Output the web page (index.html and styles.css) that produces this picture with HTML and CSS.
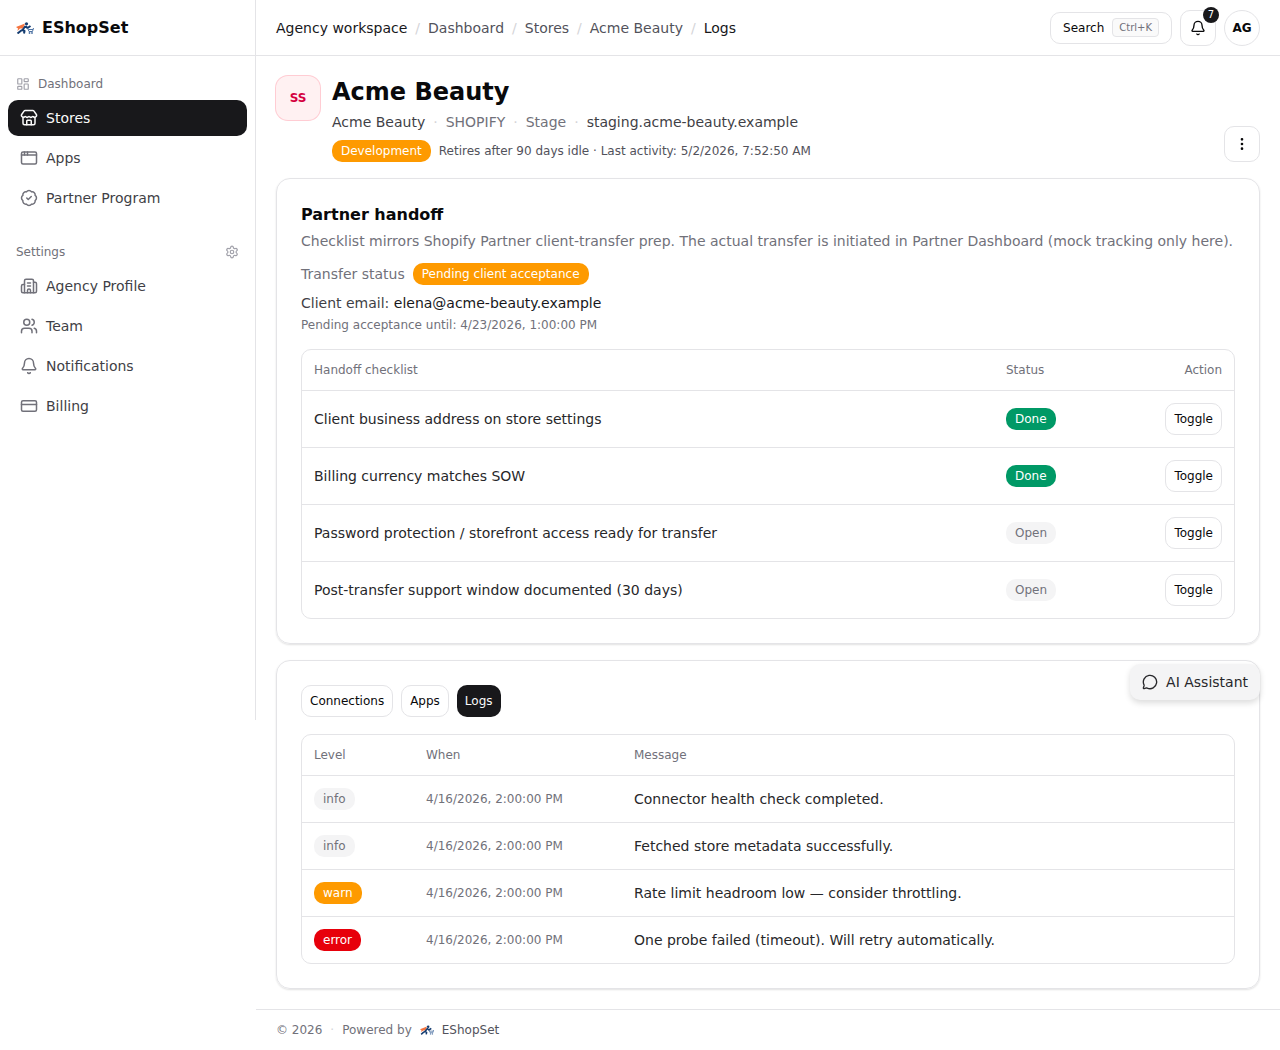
FILE: index.html
```html
<!DOCTYPE html>
<html lang="en">
<head>
    <meta charset="UTF-8">
    <meta name="viewport" content="width=device-width, initial-scale=1.0">
    <title>Acme Beauty - Logs - EShopSet</title>
    <link rel="stylesheet" href="styles.css">
</head>
<body>
    <!-- Shared icons -->
    <svg class="sprite" aria-hidden="true">
        <symbol id="logo" viewBox="0 0 36 24">
            <path d="M0 10 L18 3 L14 13 L8 13 L3 18 L4 13 Z" fill="#f4743f"/>
            <circle cx="21" cy="3.5" r="3.2" fill="#143c70"/>
            <path d="M19 8 L13 16 L17 18 L16 23 M12 16 L8 19 L3 23 M19 8 L23 12 L29 8" fill="none" stroke="#143c70" stroke-width="4" stroke-linejoin="round"/>
            <path d="M23 12 L26 19 H33 L35 12 M25 15 H34" fill="none" stroke="#4d72a3" stroke-width="2"/>
            <circle cx="27" cy="22" r="1.8" fill="#4d72a3"/>
            <circle cx="32" cy="22" r="1.8" fill="#4d72a3"/>
        </symbol>
        <symbol id="bell" viewBox="0 0 24 24">
            <path d="M10.268 21a2 2 0 0 0 3.464 0"/>
            <path d="M3.262 15.326A1 1 0 0 0 4 17h16a1 1 0 0 0 .74-1.673C19.41 13.956 18 12.499 18 8A6 6 0 0 0 6 8c0 4.499-1.411 5.956-2.738 7.326"/>
        </symbol>
    </svg>

    <div class="layout">
        <aside class="sidebar">
            <a class="brand" href="#">
                <svg class="brand-logo"><use href="#logo"/></svg>
                EShopSet
            </a>
            <nav class="side-nav">
                <div class="nav-group">
                    <a class="nav-label" href="#">
                        <svg class="icon icon-small" viewBox="0 0 24 24"><rect width="7" height="9" x="3" y="3" rx="1"/><rect width="7" height="5" x="14" y="3" rx="1"/><rect width="7" height="9" x="14" y="12" rx="1"/><rect width="7" height="5" x="3" y="16" rx="1"/></svg>
                        Dashboard
                    </a>
                    <ul class="nav-list">
                        <li><a class="nav-item active" href="#">
                            <svg class="icon" viewBox="0 0 24 24"><path d="M15 21v-5a1 1 0 0 0-1-1h-4a1 1 0 0 0-1 1v5"/><path d="M17.774 10.31a1.12 1.12 0 0 0-1.549 0 2.5 2.5 0 0 1-3.451 0 1.12 1.12 0 0 0-1.548 0 2.5 2.5 0 0 1-3.452 0 1.12 1.12 0 0 0-1.549 0 2.5 2.5 0 0 1-3.77-3.248l2.889-4.184A2 2 0 0 1 7 2h10a2 2 0 0 1 1.653.873l2.895 4.192a2.5 2.5 0 0 1-3.774 3.244"/><path d="M4 10.95V19a2 2 0 0 0 2 2h12a2 2 0 0 0 2-2v-8.05"/></svg>
                            Stores
                        </a></li>
                        <li><a class="nav-item" href="#">
                            <svg class="icon" viewBox="0 0 24 24"><rect x="2" y="4" width="20" height="16" rx="2"/><path d="M10 4v4"/><path d="M2 8h20"/><path d="M6 4v4"/></svg>
                            Apps
                        </a></li>
                        <li><a class="nav-item" href="#">
                            <svg class="icon" viewBox="0 0 24 24"><path d="M3.85 8.62a4 4 0 0 1 4.78-4.77 4 4 0 0 1 6.74 0 4 4 0 0 1 4.78 4.78 4 4 0 0 1 0 6.74 4 4 0 0 1-4.77 4.78 4 4 0 0 1-6.75 0 4 4 0 0 1-4.78-4.77 4 4 0 0 1 0-6.76Z"/><path d="m9 12 2 2 4-4"/></svg>
                            Partner Program
                        </a></li>
                    </ul>
                </div>
                <div class="nav-group">
                    <a class="nav-label nav-label-split" href="#">
                        Settings
                        <svg class="icon icon-small" viewBox="0 0 24 24"><path d="M9.671 4.136a2.34 2.34 0 0 1 4.659 0 2.34 2.34 0 0 0 3.319 1.915 2.34 2.34 0 0 1 2.33 4.033 2.34 2.34 0 0 0 0 3.831 2.34 2.34 0 0 1-2.33 4.033 2.34 2.34 0 0 0-3.319 1.915 2.34 2.34 0 0 1-4.659 0 2.34 2.34 0 0 0-3.32-1.915 2.34 2.34 0 0 1-2.33-4.033 2.34 2.34 0 0 0 0-3.831A2.34 2.34 0 0 1 6.35 6.051a2.34 2.34 0 0 0 3.319-1.915"/><circle cx="12" cy="12" r="3"/></svg>
                    </a>
                    <ul class="nav-list">
                        <li><a class="nav-item" href="#">
                            <svg class="icon" viewBox="0 0 24 24"><path d="M10 12h4"/><path d="M10 8h4"/><path d="M14 21v-3a2 2 0 0 0-4 0v3"/><path d="M6 10H4a2 2 0 0 0-2 2v7a2 2 0 0 0 2 2h16a2 2 0 0 0 2-2V9a2 2 0 0 0-2-2h-2"/><path d="M6 21V5a2 2 0 0 1 2-2h8a2 2 0 0 1 2 2v16"/></svg>
                            Agency Profile
                        </a></li>
                        <li><a class="nav-item" href="#">
                            <svg class="icon" viewBox="0 0 24 24"><path d="M16 21v-2a4 4 0 0 0-4-4H6a4 4 0 0 0-4 4v2"/><circle cx="9" cy="7" r="4"/><path d="M22 21v-2a4 4 0 0 0-3-3.87"/><path d="M16 3.13a4 4 0 0 1 0 7.75"/></svg>
                            Team
                        </a></li>
                        <li><a class="nav-item" href="#">
                            <svg class="icon"><use href="#bell"/></svg>
                            Notifications
                        </a></li>
                        <li><a class="nav-item" href="#">
                            <svg class="icon" viewBox="0 0 24 24"><rect width="20" height="14" x="2" y="5" rx="2"/><path d="M2 10h20"/></svg>
                            Billing
                        </a></li>
                    </ul>
                </div>
            </nav>
        </aside>

        <div class="page">
            <header class="topbar">
                <nav class="breadcrumb" aria-label="Breadcrumb">
                    <a class="strong" href="#">Agency workspace</a>
                    <span class="sep">/</span>
                    <a href="#">Dashboard</a>
                    <span class="sep">/</span>
                    <a href="#">Stores</a>
                    <span class="sep">/</span>
                    <a href="#">Acme Beauty</a>
                    <span class="sep">/</span>
                    <span class="strong">Logs</span>
                </nav>
                <div class="topbar-actions">
                    <button type="button" class="btn btn-search">Search <kbd>Ctrl+K</kbd></button>
                    <button type="button" class="btn btn-icon" aria-label="Notifications">
                        <svg class="icon icon-medium"><use href="#bell"/></svg>
                        <span class="count">7</span>
                    </button>
                    <button type="button" class="btn btn-icon btn-round">AG</button>
                </div>
            </header>

            <main class="content">
                <section class="store-header">
                    <div class="store-avatar">SS</div>
                    <div class="store-info">
                        <h1>Acme Beauty</h1>
                        <div class="store-meta">
                            <span class="meta-name">Acme Beauty</span>
                            <span class="sep">·</span>
                            <span>SHOPIFY</span>
                            <span class="sep">·</span>
                            <span>Stage</span>
                            <span class="sep">·</span>
                            <a class="meta-name" href="#">staging.acme-beauty.example</a>
                        </div>
                        <div class="store-state">
                            <span class="badge badge-warn">Development</span>
                            <span>Retires after 90 days idle · Last activity: 5/2/2026, 7:52:50 AM</span>
                        </div>
                    </div>
                    <button type="button" class="btn btn-icon" aria-label="More actions">
                        <svg class="icon icon-medium icon-dots" viewBox="0 0 24 24"><circle cx="12" cy="12" r="1"/><circle cx="12" cy="5" r="1"/><circle cx="12" cy="19" r="1"/></svg>
                    </button>
                </section>

                <!-- Partner handoff -->
                <section class="card">
                    <h2>Partner handoff</h2>
                    <p class="card-desc">Checklist mirrors Shopify Partner client-transfer prep. The actual transfer is initiated in Partner Dashboard (mock tracking only here).</p>
                    <div class="transfer-status">
                        Transfer status
                        <span class="badge badge-warn">Pending client acceptance</span>
                    </div>
                    <p class="client-email">Client email: <span class="strong">elena@acme-beauty.example</span></p>
                    <p class="pending-until">Pending acceptance until: 4/23/2026, 1:00:00 PM</p>
                    <div class="table-wrap">
                        <table class="checklist">
                            <thead>
                                <tr><th>Handoff checklist</th><th class="col-status">Status</th><th class="col-action">Action</th></tr>
                            </thead>
                            <tbody>
                                <tr>
                                    <td>Client business address on store settings</td>
                                    <td><span class="badge badge-done">Done</span></td>
                                    <td><button type="button" class="btn">Toggle</button></td>
                                </tr>
                                <tr>
                                    <td>Billing currency matches SOW</td>
                                    <td><span class="badge badge-done">Done</span></td>
                                    <td><button type="button" class="btn">Toggle</button></td>
                                </tr>
                                <tr>
                                    <td>Password protection / storefront access ready for transfer</td>
                                    <td><span class="badge">Open</span></td>
                                    <td><button type="button" class="btn">Toggle</button></td>
                                </tr>
                                <tr>
                                    <td>Post-transfer support window documented (30 days)</td>
                                    <td><span class="badge">Open</span></td>
                                    <td><button type="button" class="btn">Toggle</button></td>
                                </tr>
                            </tbody>
                        </table>
                    </div>
                </section>

                <!-- Logs -->
                <section class="card">
                    <div class="tabs">
                        <button type="button" class="btn">Connections</button>
                        <button type="button" class="btn">Apps</button>
                        <button type="button" class="btn btn-active">Logs</button>
                    </div>
                    <div class="table-wrap">
                        <table class="logs">
                            <thead>
                                <tr><th class="col-level">Level</th><th class="col-when">When</th><th>Message</th></tr>
                            </thead>
                            <tbody>
                                <tr>
                                    <td><span class="badge">info</span></td>
                                    <td class="when">4/16/2026, 2:00:00 PM</td>
                                    <td>Connector health check completed.</td>
                                </tr>
                                <tr>
                                    <td><span class="badge">info</span></td>
                                    <td class="when">4/16/2026, 2:00:00 PM</td>
                                    <td>Fetched store metadata successfully.</td>
                                </tr>
                                <tr>
                                    <td><span class="badge badge-warn">warn</span></td>
                                    <td class="when">4/16/2026, 2:00:00 PM</td>
                                    <td>Rate limit headroom low — consider throttling.</td>
                                </tr>
                                <tr>
                                    <td><span class="badge badge-error">error</span></td>
                                    <td class="when">4/16/2026, 2:00:00 PM</td>
                                    <td>One probe failed (timeout). Will retry automatically.</td>
                                </tr>
                            </tbody>
                        </table>
                    </div>
                </section>
            </main>

            <footer class="footer">
                <span>© 2026</span>
                <span class="sep">·</span>
                <span>Powered by</span>
                <a href="#">
                    <svg class="footer-logo"><use href="#logo"/></svg>
                    EShopSet
                </a>
            </footer>
        </div>
    </div>

    <button type="button" class="assistant">
        <svg class="icon icon-medium" viewBox="0 0 24 24"><path d="M2.992 16.342a2 2 0 0 1 .094 1.167l-1.065 3.29a1 1 0 0 0 1.236 1.168l3.413-.998a2 2 0 0 1 1.099.092 10 10 0 1 0-4.777-4.719"/></svg>
        AI Assistant
    </button>
</body>
</html>
```
FILE: styles.css
```css
* {
    box-sizing: border-box;
}
body {
    position: relative;
    margin: 0;
    font-family: "DejaVu Sans", sans-serif;
    font-size: 14px;
    line-height: 20px;
    color: #27272a;
    background-color: #fff;
}
h1, h2, p, ul {
    margin: 0;
    padding: 0;
}
ul {
    list-style: none;
}
a {
    color: inherit;
    text-decoration: none;
}
button {
    font-family: inherit;
    cursor: pointer;
}
.sprite {
    display: none;
}
.icon {
    width: 18px;
    height: 18px;
    flex-shrink: 0;
    fill: none;
    stroke: currentColor;
    stroke-width: 2;
    stroke-linecap: round;
    stroke-linejoin: round;
}
.icon-small {
    width: 14px;
    height: 14px;
    color: #a1a1aa;
}
.icon-medium {
    width: 16px;
    height: 16px;
}
.icon-dots {
    fill: currentColor;
}
.strong {
    color: #18181b;
}
.sep {
    color: #d4d4d8;
}
.layout {
    display: flex;
    align-items: flex-start;
}

/* Sidebar */
.sidebar {
    flex: 0 0 256px;
    min-height: 720px;
    border-right: 1px solid #e4e4e7;
}
.brand {
    display: flex;
    align-items: center;
    gap: 8px;
    height: 56px;
    padding: 0 16px;
    border-bottom: 1px solid #e4e4e7;
    font-size: 16px;
    font-weight: bold;
    color: #09090b;
}
.brand-logo {
    width: 18px;
    height: 12px;
}
.side-nav {
    display: flex;
    flex-direction: column;
    gap: 28px;
    padding: 20px 8px;
}
.nav-label {
    display: flex;
    align-items: center;
    gap: 8px;
    padding: 0 8px;
    margin-bottom: 8px;
    font-size: 12px;
    line-height: 16px;
    color: #71717a;
}
.nav-label-split {
    justify-content: space-between;
}
.nav-list {
    display: flex;
    flex-direction: column;
    gap: 4px;
}
.nav-item {
    display: flex;
    align-items: center;
    gap: 8px;
    padding: 8px 12px;
    border-radius: 10px;
    color: #3f3f46;
}
.nav-item .icon {
    color: #71717a;
}
.nav-item.active, .nav-item.active .icon {
    background-color: #18181b;
    color: #fafafa;
}

/* Top bar */
.page {
    flex: 1;
    min-width: 0;
}
.topbar {
    display: flex;
    align-items: center;
    justify-content: space-between;
    height: 56px;
    padding: 0 20px;
    border-bottom: 1px solid #e4e4e7;
}
.breadcrumb {
    display: flex;
    gap: 8px;
    color: #52525b;
}
.topbar-actions {
    display: flex;
    align-items: center;
    gap: 8px;
}
.btn {
    display: inline-flex;
    align-items: center;
    justify-content: center;
    gap: 8px;
    height: 32px;
    padding: 0 8px;
    border: 1px solid #e4e4e7;
    border-radius: 10px;
    background-color: #fff;
    color: #09090b;
    font-size: 12px;
    line-height: 16px;
}
.btn:hover {
    background-color: #f4f4f5;
}
.btn-search {
    padding: 0 12px;
}
.btn-icon {
    position: relative;
    width: 36px;
    height: 36px;
    padding: 0;
    flex-shrink: 0;
}
.btn-round {
    border-radius: 50%;
    font-weight: bold;
}
.btn-active, .btn-active:hover {
    border: none;
    background-color: #18181b;
    color: #fafafa;
}
kbd {
    padding: 1px 6px;
    border: 1px solid #e4e4e7;
    border-radius: 4px;
    background-color: #fafafa;
    color: #71717a;
    font-family: inherit;
    font-size: 10px;
    line-height: 15px;
}
.count {
    position: absolute;
    top: -4px;
    right: -4px;
    width: 16px;
    height: 16px;
    border-radius: 50%;
    background-color: #18181b;
    color: #fff;
    font-size: 10px;
    line-height: 16px;
    text-align: center;
}

/* Store header */
.content {
    display: flex;
    flex-direction: column;
    gap: 16px;
    padding: 20px;
}
.store-header {
    display: flex;
    gap: 12px;
}
.store-avatar {
    display: flex;
    align-items: center;
    justify-content: center;
    width: 44px;
    height: 44px;
    border-radius: 12px;
    background-color: #fff1f2;
    box-shadow: 0 0 0 1px #ffccd3;
    color: #d4003f;
    font-size: 12px;
    font-weight: bold;
}
.store-info {
    flex: 1;
}
.store-header .btn-icon {
    align-self: flex-end;
}
h1 {
    font-size: 24px;
    line-height: 32px;
    color: #09090b;
}
.store-meta {
    display: flex;
    gap: 8px;
    margin-top: 4px;
    color: #71717a;
}
.meta-name {
    color: #3f3f46;
}
.store-state {
    display: flex;
    align-items: center;
    gap: 8px;
    margin-top: 8px;
    font-size: 12px;
    line-height: 16px;
    color: #52525b;
}
.badge {
    display: block;
    width: fit-content;
    padding: 3px 9px;
    border-radius: 10px;
    background-color: #f4f4f5;
    color: #71717a;
    font-size: 12px;
    line-height: 16px;
}
.badge-warn {
    background-color: #fe9a00;
    color: #fff;
}
.badge-done {
    background-color: #009966;
    color: #fff;
}
.badge-error {
    background-color: #e7000b;
    color: #fff;
}

/* Cards */
.card {
    padding: 24px;
    border: 1px solid #e4e4e7;
    border-radius: 14px;
    box-shadow: 0 1px 2px rgba(0, 0, 0, 0.12);
}
h2 {
    font-size: 16px;
    line-height: 24px;
    color: #09090b;
}
.card-desc {
    margin-top: 4px;
    color: #71717a;
}
.transfer-status {
    display: flex;
    align-items: center;
    gap: 8px;
    margin-top: 12px;
    color: #71717a;
}
.client-email {
    margin-top: 8px;
    color: #3f3f46;
}
.pending-until {
    margin-top: 4px;
    font-size: 12px;
    line-height: 16px;
    color: #71717a;
}
.tabs {
    display: flex;
    gap: 8px;
}
.table-wrap {
    margin-top: 16px;
    border: 1px solid #e4e4e7;
    border-radius: 10px;
}
.tabs + .table-wrap {
    margin-top: 17px;
}
table {
    width: 100%;
    border-spacing: 0;
}
th {
    padding: 12px;
    font-size: 12px;
    font-weight: normal;
    line-height: 16px;
    text-align: left;
    color: #71717a;
}
td {
    padding: 12px;
    border-top: 1px solid #e4e4e7;
}
.checklist th:last-child, .checklist td:last-child {
    text-align: right;
}
.checklist .btn {
    display: block;
    margin-left: auto;
}
.col-status, .col-action {
    width: 120px;
}
.col-level {
    width: 112px;
}
.col-when {
    width: 208px;
}
.when {
    font-size: 12px;
    color: #71717a;
}

/* Footer */
.footer {
    display: flex;
    align-items: center;
    gap: 8px;
    padding: 12px 20px;
    border-top: 1px solid #e4e4e7;
    font-size: 12px;
    line-height: 16px;
    color: #71717a;
}
.footer a {
    display: flex;
    align-items: center;
    gap: 8px;
    color: #52525b;
}
.footer-logo {
    width: 14px;
    height: 10px;
}

/* Floating assistant button */
.assistant {
    position: absolute;
    top: 664px;
    right: 20px;
    display: flex;
    align-items: center;
    gap: 8px;
    height: 36px;
    padding: 0 12px;
    border: none;
    border-radius: 10px;
    background-color: #f4f4f5;
    box-shadow: 0 3px 6px rgba(0, 0, 0, 0.14);
    color: #27272a;
    font-size: 14px;
}
```
